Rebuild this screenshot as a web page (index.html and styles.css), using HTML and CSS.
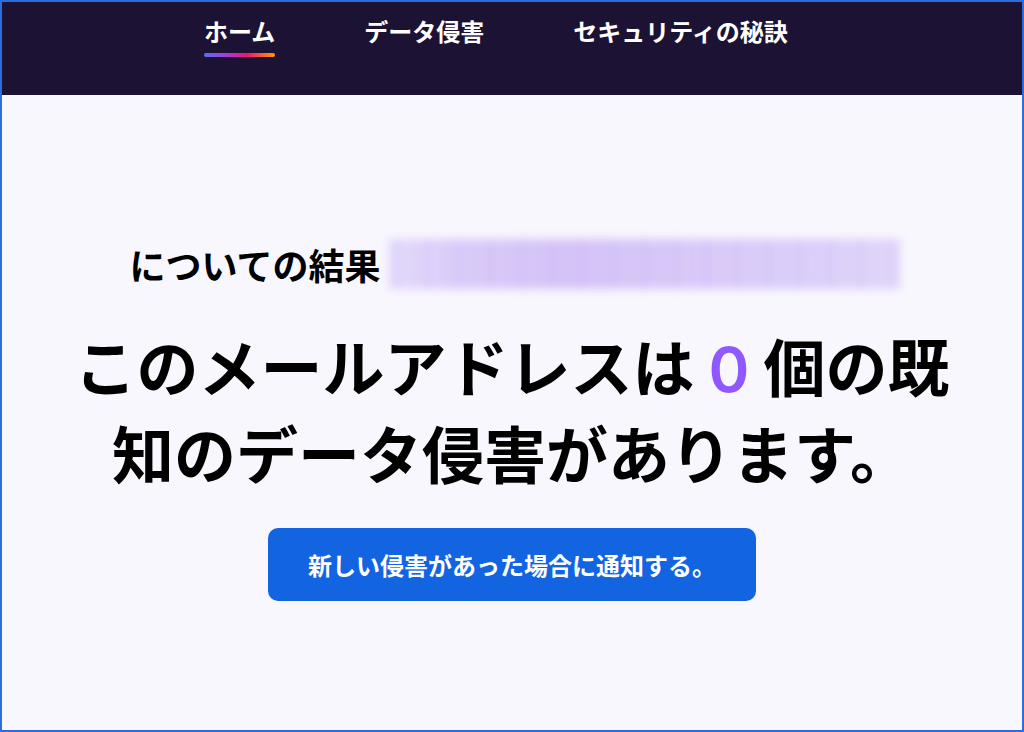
FILE: index.html
```html
<!DOCTYPE html>
<html lang="ja">
<head>
<meta charset="utf-8">
<title>Firefox Monitor</title>
<link rel="stylesheet" href="styles.css">
</head>
<body>
<div class="frame">
  <header class="topbar">
    <nav class="nav">
      <a class="nav-link active" href="#">ホーム</a>
      <a class="nav-link" href="#">データ侵害</a>
      <a class="nav-link" href="#">セキュリティの秘訣</a>
    </nav>
  </header>
  <main class="hero">
    <p class="result-line"><span class="result-label">についての結果</span><span class="email-blur"></span></p>
    <h1 class="headline">このメールアドレスは <span class="count">0</span> 個の既知のデータ侵害があります。</h1>
    <button class="cta" type="button">新しい侵害があった場合に通知する。</button>
  </main>
</div>
</body>
</html>
```

FILE: styles.css
```css
* { box-sizing: border-box; }

html, body {
  margin: 0;
  padding: 0;
}

body {
  font-family: "Noto Sans CJK JP", "Noto Sans", sans-serif;
  background: #f9f7fe;
  color: #000;
}

.frame {
  width: 1024px;
  height: 732px;
  border: 2px solid #2b6de0;
  background: #f9f7fe;
  display: flex;
  flex-direction: column;
  overflow: hidden;
}

.topbar {
  background: #1c1233;
  height: 93px;
  flex: 0 0 auto;
}

.nav {
  display: flex;
  gap: 89px;
  padding-left: 202px;
  padding-top: 13px;
}

.nav-link {
  display: inline-flex;
  flex-direction: column;
  color: #ffffff;
  text-decoration: none;
  font-size: 24px;
  font-weight: 700;
  line-height: 32px;
}

.nav-link::after {
  content: "";
  display: block;
  height: 4px;
  margin-top: 6px;
  border-radius: 2px;
  background: transparent;
}

.nav-link.active::after {
  background: linear-gradient(90deg, #5c6cf2 0%, #a83ad0 35%, #ee1570 60%, #ff9a00 100%);
}

.hero {
  display: flex;
  flex-direction: column;
  align-items: center;
  padding-top: 143px;
}

.result-line {
  margin: 0;
  display: flex;
  align-items: center;
  height: 52px;
  padding-left: 6px;
}

.result-label {
  font-size: 36px;
  font-weight: 700;
  line-height: 52px;
}

.email-blur {
  display: block;
  width: 512px;
  height: 50px;
  margin-left: 8px;
  background:
    repeating-linear-gradient(90deg,
      rgba(196, 172, 246, 0.0) 0px,
      rgba(196, 172, 246, 0.35) 9px,
      rgba(196, 172, 246, 0.0) 17px,
      rgba(196, 172, 246, 0.25) 26px,
      rgba(196, 172, 246, 0.0) 31px),
    linear-gradient(90deg, #e8e0fb 0%, #dccff8 15%, #d6c6f7 35%, #dbcdf8 60%, #ded3f9 80%, #e4dafa 100%);
  filter: blur(5px);
}

.headline {
  margin: 32px 0 0;
  max-width: 900px;
  font-size: 62px;
  font-weight: 700;
  line-height: 87px;
  text-align: center;
}

.count {
  font-family: "Inter", "Noto Sans", sans-serif;
  font-weight: 600;
  line-height: 1;
  color: #9059ff;
}

.cta {
  margin-top: 32px;
  height: 73px;
  padding: 0 40px;
  border: none;
  border-radius: 10px;
  background: #1264e1;
  color: #ffffff;
  font-family: "Noto Sans CJK JP", "Noto Sans", sans-serif;
  font-size: 24px;
  font-weight: 700;
  line-height: 32px;
  cursor: pointer;
}
```
